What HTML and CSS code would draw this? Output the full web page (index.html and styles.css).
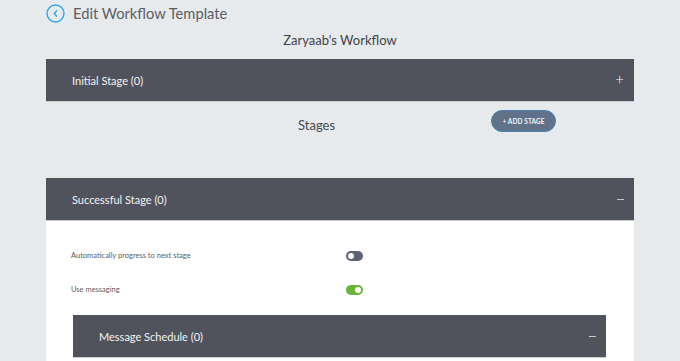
FILE: index.html
```html
<!DOCTYPE html>
<html>
<head>
<meta charset="utf-8">
<link rel="stylesheet" href="styles.css">
</head>
<body>
<div class="page">
  <div class="topbar">
    <span class="back">
      <svg width="19" height="19" viewBox="0 0 19 19"><circle cx="9.5" cy="9.5" r="8.5" fill="none" stroke="#29a9e6" stroke-width="1.4"/><path d="M10.6 6.8 L8.2 9.5 L10.6 12.2" fill="none" stroke="#29a9e6" stroke-width="1.3" stroke-linecap="round" stroke-linejoin="round"/></svg>
    </span>
    <span class="title">Edit Workflow Template</span>
  </div>
  <div class="wfname">Zaryaab's Workflow</div>

  <div class="stage-head">
    <span>Initial Stage (0)</span>
    <span class="sign plus">+</span>
  </div>

  <div class="stages-row">
    <span class="stages-label">Stages</span>
    <button class="add-btn">+ ADD STAGE</button>
  </div>

  <div class="stage-head">
    <span>Successful Stage (0)</span>
    <span class="sign minus"></span>
  </div>
  <div class="stage-body">
    <div class="opt-row">
      <span class="opt-label">Automatically progress to next stage</span>
      <span class="toggle off"><span class="knob"></span></span>
    </div>
    <div class="opt-row">
      <span class="opt-label">Use messaging</span>
      <span class="toggle on"><span class="knob"></span></span>
    </div>
    <div class="stage-head inner">
      <span>Message Schedule (0)</span>
      <span class="sign minus"></span>
    </div>
  </div>
</div>
</body>
</html>
```

FILE: styles.css
```css
html, body {
  margin: 0;
  padding: 0;
  background: #e7eaed;
  font-family: "Lato", "Open Sans", sans-serif;
  overflow: hidden;
}
.page {
  width: 588px;
  margin: 0 auto;
}
.topbar {
  display: flex;
  align-items: center;
  height: 27px;
  gap: 8px;
}
.back {
  display: flex;
  width: 19px;
  height: 19px;
}
.title {
  font-size: 14.7px;
  color: #5b5e63;
  font-weight: 400;
  position: relative;
  top: -1px;
}
.wfname {
  text-align: center;
  font-size: 13px;
  color: #3f4247;
  height: 32px;
  line-height: 26px;
}
.stage-head {
  display: flex;
  justify-content: space-between;
  align-items: center;
  height: 43px;
  background: #50535b;
  color: #f3f4f5;
  font-size: 11px;
  padding: 0 10px 0 26px;
  box-sizing: border-box;
  border-bottom: 1px solid #c9cbce;
}
.sign.plus {
  font-size: 15px;
  font-weight: 300;
  color: #ffffff;
  position: relative;
  top: -1px;
}
.sign.minus {
  width: 7px;
  height: 1px;
  background: #c8cacd;
}
.stages-row {
  height: 76px;
  display: flex;
  align-items: flex-start;
}
.stages-label {
  font-size: 13px;
  color: #45484d;
  margin-left: 252px;
  margin-top: 15px;
}
.add-btn {
  margin-left: 156px;
  margin-top: 8px;
  width: 65px;
  height: 22px;
  border-radius: 11px;
  background: #607289;
  border: 1px solid #4d7db3;
  color: #f2f4f7;
  font-family: inherit;
  font-size: 6.5px;
  font-weight: 700;
  letter-spacing: 0.1px;
  padding: 0;
}
.stage-body {
  background: #ffffff;
  padding: 26px 28px 0 25px;
  height: 140px;
  box-sizing: border-box;
}
.opt-row {
  display: flex;
  align-items: center;
  height: 17px;
  margin-bottom: 17px;
}
.opt-label {
  font-size: 7.5px;
  color: #5a5d62;
  width: 275px;
}
.toggle {
  width: 17px;
  height: 10px;
  border-radius: 5px;
  display: flex;
  align-items: center;
  padding: 0 2px;
  box-sizing: border-box;
}
.toggle .knob {
  width: 6px;
  height: 6px;
  border-radius: 50%;
  background: #ffffff;
}
.toggle.off {
  background: #5b6272;
}
.toggle.on {
  background: #6bb43a;
  justify-content: flex-end;
}
.stage-head.inner {
  margin-top: 7px;
  margin-left: 2px;
  font-size: 11px;
}
```
